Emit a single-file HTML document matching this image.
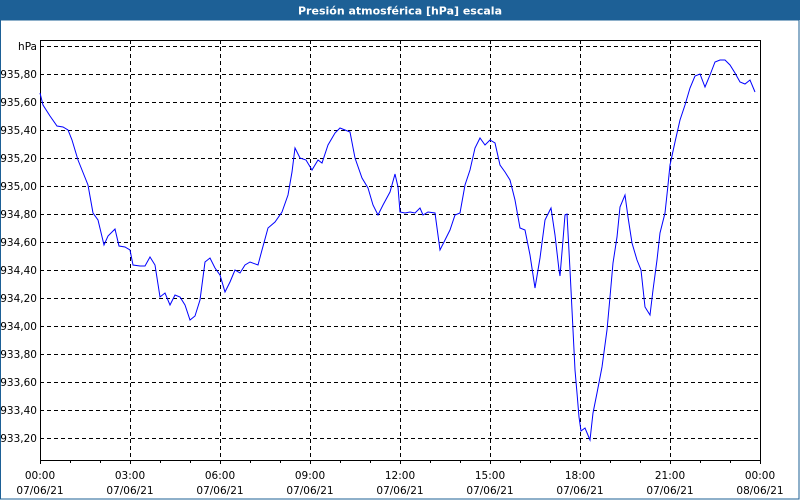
<!DOCTYPE html>
<html><head><meta charset="utf-8"><style>
body{margin:0;width:800px;height:500px;background:#fff;overflow:hidden;font-family:"DejaVu Sans","Liberation Sans",sans-serif;}
</style></head><body>
<svg width="800" height="500" xmlns="http://www.w3.org/2000/svg" font-family="DejaVu Sans, Liberation Sans, sans-serif" font-size="10.5">
<rect x="0" y="0" width="800" height="20" fill="#1d6096"/>
<text x="400" y="14.5" fill="#fff" font-weight="bold" text-anchor="middle" font-size="11">Presión atmosférica [hPa] escala</text>
<rect x="0.5" y="20" width="798.5" height="479" fill="none" stroke="#1d6096" stroke-width="1"/>
<g stroke="#000" stroke-dasharray="4,3" stroke-width="1">
<line x1="40" y1="46.5" x2="760" y2="46.5"/>
<line x1="40" y1="74.5" x2="760" y2="74.5"/><line x1="40" y1="102.5" x2="760" y2="102.5"/>
<line x1="40" y1="130.5" x2="760" y2="130.5"/><line x1="40" y1="158.5" x2="760" y2="158.5"/>
<line x1="40" y1="186.5" x2="760" y2="186.5"/><line x1="40" y1="214.5" x2="760" y2="214.5"/>
<line x1="40" y1="242.5" x2="760" y2="242.5"/><line x1="40" y1="270.5" x2="760" y2="270.5"/>
<line x1="40" y1="298.5" x2="760" y2="298.5"/><line x1="40" y1="326.5" x2="760" y2="326.5"/>
<line x1="40" y1="354.5" x2="760" y2="354.5"/><line x1="40" y1="382.5" x2="760" y2="382.5"/>
<line x1="40" y1="410.5" x2="760" y2="410.5"/><line x1="40" y1="438.5" x2="760" y2="438.5"/>
<line x1="130.5" y1="40" x2="130.5" y2="460"/><line x1="220.5" y1="40" x2="220.5" y2="460"/>
<line x1="310.5" y1="40" x2="310.5" y2="460"/><line x1="400.5" y1="40" x2="400.5" y2="460"/>
<line x1="490.5" y1="40" x2="490.5" y2="460"/><line x1="580.5" y1="40" x2="580.5" y2="460"/>
<line x1="670.5" y1="40" x2="670.5" y2="460"/>
</g>
<rect x="40.5" y="40.5" width="720" height="420" fill="none" stroke="#000" stroke-width="1"/>
<g stroke="#000"><line x1="40.5" y1="460" x2="40.5" y2="464"/><line x1="70.5" y1="460" x2="70.5" y2="463"/><line x1="100.5" y1="460" x2="100.5" y2="463"/><line x1="130.5" y1="460" x2="130.5" y2="464"/><line x1="160.5" y1="460" x2="160.5" y2="463"/><line x1="190.5" y1="460" x2="190.5" y2="463"/><line x1="220.5" y1="460" x2="220.5" y2="464"/><line x1="250.5" y1="460" x2="250.5" y2="463"/><line x1="280.5" y1="460" x2="280.5" y2="463"/><line x1="310.5" y1="460" x2="310.5" y2="464"/><line x1="340.5" y1="460" x2="340.5" y2="463"/><line x1="370.5" y1="460" x2="370.5" y2="463"/><line x1="400.5" y1="460" x2="400.5" y2="464"/><line x1="430.5" y1="460" x2="430.5" y2="463"/><line x1="460.5" y1="460" x2="460.5" y2="463"/><line x1="490.5" y1="460" x2="490.5" y2="464"/><line x1="520.5" y1="460" x2="520.5" y2="463"/><line x1="550.5" y1="460" x2="550.5" y2="463"/><line x1="580.5" y1="460" x2="580.5" y2="464"/><line x1="610.5" y1="460" x2="610.5" y2="463"/><line x1="640.5" y1="460" x2="640.5" y2="463"/><line x1="670.5" y1="460" x2="670.5" y2="464"/><line x1="700.5" y1="460" x2="700.5" y2="463"/><line x1="730.5" y1="460" x2="730.5" y2="463"/><line x1="760.5" y1="460" x2="760.5" y2="464"/></g>
<g text-anchor="end" fill="#000">
<text x="37" y="50">hPa</text>
<text x="37" y="78">935,80</text><text x="37" y="106">935,60</text><text x="37" y="134">935,40</text>
<text x="37" y="162">935,20</text><text x="37" y="190">935,00</text><text x="37" y="218">934,80</text>
<text x="37" y="246">934,60</text><text x="37" y="274">934,40</text><text x="37" y="302">934,20</text>
<text x="37" y="330">934,00</text><text x="37" y="358">933,80</text><text x="37" y="386">933,60</text>
<text x="37" y="414">933,40</text><text x="37" y="442">933,20</text>
</g>
<g text-anchor="middle" fill="#000">
<text x="40" y="479">00:00</text><text x="40" y="494">07/06/21</text>
<text x="130" y="479">03:00</text><text x="130" y="494">07/06/21</text>
<text x="220" y="479">06:00</text><text x="220" y="494">07/06/21</text>
<text x="310" y="479">09:00</text><text x="310" y="494">07/06/21</text>
<text x="400" y="479">12:00</text><text x="400" y="494">07/06/21</text>
<text x="490" y="479">15:00</text><text x="490" y="494">07/06/21</text>
<text x="580" y="479">18:00</text><text x="580" y="494">07/06/21</text>
<text x="670" y="479">21:00</text><text x="670" y="494">07/06/21</text>
<text x="760" y="479">00:00</text><text x="760" y="494">08/06/21</text>
</g>
<polyline fill="none" stroke="#0000ff" stroke-width="1" points="40,93 43,105 50,116 57,126 63,127 68,130 72,140 78,160 88,185 93,213 98,220 104,245 108,236 115,229 119,246 125,247 130,250 133,265 140,266 145,266 150,257 155,265 160,297 165,293 170,305 175,295 180,297 185,305 190,320 195,316 200,300 205,262 210,258 215,268 220,275 225,292 230,282 235,270 240,273 245,265 250,262 258,265 262,250 268,228 275,222 282,212 288,195 292,172 295,148 300,158 306,160 312,170 318,160 322,163 328,145 335,133 340,128 345,130 350,132 355,158 362,178 368,188 373,205 378,215 383,205 390,192 395,174 398,187 400,212 405,213 410,212 415,213 420,208 423,215 428,212 435,213 440,250 445,240 450,230 455,215 460,213 465,185 470,170 475,148 480,138 485,145 490,140 495,143 500,165 505,172 510,180 515,200 520,228 525,230 530,255 535,288 540,258 545,220 549,212 551,208 555,235 559,270 560,276 563,240 565,215 567,214 570,270 572,310 573,330 575,370 577,393 579,417 581,431 585,428 590,440 593,413 597,393 602,367 607,330 610,297 613,263 617,237 620,207 625,195 628,217 632,243 637,260 641,270 645,307 650,315 653,290 657,260 660,233 665,213 668,185 670,165 675,142 680,120 685,105 690,88 695,76 700,74 705,87 710,75 715,62 720,60 725,60 730,65 735,73 740,82 745,84 750,80 755,92"/>
</svg>
</body></html>
